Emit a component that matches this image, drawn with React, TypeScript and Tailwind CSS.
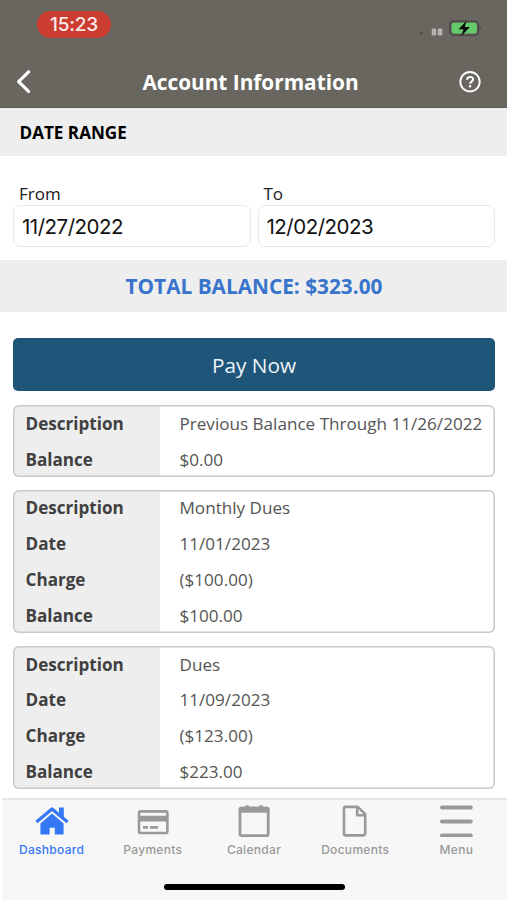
import type { ReactNode } from "react";

type Row = [label: string, value: string];

const entries: Row[][] = [
  [
    ["Description", "Previous Balance Through 11/26/2022"],
    ["Balance", "$0.00"],
  ],
  [
    ["Description", "Monthly Dues"],
    ["Date", "11/01/2023"],
    ["Charge", "($100.00)"],
    ["Balance", "$100.00"],
  ],
  [
    ["Description", "Dues"],
    ["Date", "11/09/2023"],
    ["Charge", "($123.00)"],
    ["Balance", "$223.00"],
  ],
];

const HomeIcon = () => (
  <svg width="34" height="34" viewBox="0 0 34 34" fill="currentColor">
    <path d="M17 10.6 28.6 20.6V30.4a1.2 1.2 0 0 1-1.2 1.2h-7.6v-6.8h-5.2v6.8h-8a1.2 1.2 0 0 1-1.2-1.2V20.6z" />
    <path d="M1.4 19 17 6l15.6 13" fill="none" stroke="currentColor" strokeWidth="3.3" strokeLinejoin="round" />
    <path d="M24 4.6h4.8v12l-4.8-4.2z" />
  </svg>
);

const CardIcon = () => (
  <svg width="34" height="34" viewBox="0 0 34 34" fill="currentColor">
    <rect x="3" y="8.4" width="28.4" height="21.6" rx="1.8" fill="none" stroke="currentColor" strokeWidth="2.6" />
    <path d="M3 12.8h28.4v5.6H3zM7 23h5v2.8H7zM14 23h8v2.8h-8z" />
  </svg>
);

const CalendarIcon = () => (
  <svg width="34" height="34" viewBox="0 0 34 34" fill="currentColor">
    <rect x="3" y="5.2" width="28.2" height="27.4" rx="1.4" fill="none" stroke="currentColor" strokeWidth="2.8" />
    <path d="M3.2 3.8H31l1.4 1.4v4.5H1.8V5.2zM8 3.9l.8-1.7h2.6l.8 1.7zM21.8 3.9l.8-1.7h2.6l.8 1.7z" />
  </svg>
);

const DocumentIcon = () => (
  <svg width="34" height="34" viewBox="0 0 34 34" fill="none" stroke="currentColor" strokeWidth="2.6" strokeLinejoin="round">
    <path d="M7.2 3.9h12.6l7.4 7.2v19.3a2 2 0 0 1-2 2H8a2 2 0 0 1-2-2V5.1a1.2 1.2 0 0 1 1.2-1.2z" />
    <path d="M19.2 4.4v7.8h8" />
  </svg>
);

const MenuIcon = () => (
  <svg width="34" height="34" viewBox="0 0 34 34" stroke="currentColor" strokeWidth="4" strokeLinecap="round">
    <path d="M3 4.4h28.8M3 18.5h28.8M3 32.4h28.8" />
  </svg>
);

const tabs: { label: string; icon: ReactNode; active?: boolean }[] = [
  { label: "Dashboard", icon: <HomeIcon />, active: true },
  { label: "Payments", icon: <CardIcon /> },
  { label: "Calendar", icon: <CalendarIcon /> },
  { label: "Documents", icon: <DocumentIcon /> },
  { label: "Menu", icon: <MenuIcon /> },
];

const StatusBar = () => (
  <div className="flex h-[55px] justify-between pl-[37px] pr-[25px]">
    <span className="mt-[11px] flex h-[27px] w-[74px] items-center justify-center rounded-full bg-[#cc3d31] pt-0.5 font-['Inter',sans-serif] text-[19px] font-medium tracking-[-0.2px] text-[#fbe9e6]">
      15:23
    </span>
    <svg className="mt-[18px]" width="64" height="22" viewBox="0 0 64 22">
      <circle cx="3.5" cy="15.2" r="1.9" fill="#55524e" />
      <rect x="13.7" y="10.5" width="4.6" height="7" rx="1.2" fill="#b5b2af" />
      <rect x="19.8" y="10.5" width="4.6" height="7" rx="1.2" fill="#b5b2af" />
      <rect x="32" y="3.1" width="28.4" height="14" rx="3.8" fill="none" stroke="#45423f" strokeWidth="1.4" />
      <rect x="33.6" y="4.7" width="25.2" height="10.8" rx="2.3" fill="#65ca69" />
      <path d="M61.7 8q2 2.1 0 4.2z" fill="#45423f" />
      <path d="M48.6 2.8 40.5 11.3h5l-2.4 6.9 8.8-9.1h-5.1z" fill="#090b09" />
    </svg>
  </div>
);

const Header = () => (
  <header className="h-[108px] shrink-0 border-b border-[#5d5a55] bg-[#696660] text-white">
    <StatusBar />
    <div className="flex h-[53px] items-center justify-between pl-[15px] pr-[25px]">
      <svg width="18" height="26" viewBox="0 0 18 26" fill="none" stroke="currentColor" strokeWidth="3.2" strokeLinecap="round" strokeLinejoin="round">
        <path d="M13.6 2.8 3.6 12.6l10 9.8" />
      </svg>
      <h1 className="ml-[10px] pt-0.5 text-[20.8px] font-bold">Account Information</h1>
      <svg width="24" height="24" viewBox="0 0 24 24" fill="none" stroke="currentColor" strokeWidth="1.9">
        <circle cx="12" cy="11.7" r="9.7" />
        <path d="M9.1 9.8c0-3.9 6-3.7 6-.3 0 2.1-3 2.1-3 4.2" strokeWidth="2" />
        <circle cx="12.1" cy="16.2" r="1.2" fill="currentColor" stroke="none" />
      </svg>
    </div>
  </header>
);

const DateField = ({ label, value }: { label: string; value: string }) => (
  <label className="flex flex-1 flex-col">
    <span className="pl-1.5 text-[17px] leading-[23px] text-[#202020]">{label}</span>
    <span className="flex h-[42px] items-center rounded-[7px] border border-[#e8e8e8] pl-2 pt-0.5 font-['Inter',sans-serif] text-[20.5px] tracking-[-0.5px] text-[#111]">
      {value}
    </span>
  </label>
);

const EntryCard = ({ rows }: { rows: Row[] }) => (
  <dl className="rounded-[6px] bg-[linear-gradient(to_right,#eeeeee_147px,#ffffff_147px)] shadow-[inset_0_0_0_1.5px_#c9c9c9]">
    {rows.map(([label, value]) => (
      <div key={label} className="flex h-[35.8px] items-center pt-px text-[17.1px]">
        <dt className="w-[147px] shrink-0 pl-[12.5px] font-bold text-[#404040]">{label}</dt>
        <dd className="pl-[19.5px] whitespace-nowrap text-[#555]">{value}</dd>
      </div>
    ))}
  </dl>
);

const TabBar = () => (
  <nav className="mt-auto ml-[2px] h-[102px] shrink-0 border-t-2 border-[#e6e6e6] bg-[#f7f7f7] font-['Inter',sans-serif]">
    <div className="-ml-px flex">
      {tabs.map(({ label, icon, active }) => (
        <a
          key={label}
          href="#"
          className={`flex flex-1 flex-col items-center pt-[3px] text-[12px] font-medium tracking-[0.3px] ${active ? "text-[#3478f6]" : "text-[#999]"}`}
        >
          {icon}
          <span className="mt-[3px] leading-5">{label}</span>
        </a>
      ))}
    </div>
    <div className="mx-auto mt-[24px] h-[6px] w-[181px] rounded-full bg-black" />
  </nav>
);

export default function App() {
  return (
    <div className="flex h-[900px] w-[507px] flex-col overflow-hidden bg-white font-['Open_Sans',sans-serif]">
      <Header />
      <h2 className="flex h-[48px] shrink-0 items-center bg-[#eee] pt-0.5 pl-[19.5px] text-[17.1px] font-bold text-black">
        DATE RANGE
      </h2>
      <div className="flex shrink-0 gap-[7px] pt-[26px] pr-[12px] pb-[13px] pl-[13px]">
        <DateField label="From" value="11/27/2022" />
        <DateField label="To" value="12/02/2023" />
      </div>
      <p className="flex h-[52px] shrink-0 items-center justify-center bg-[#eee] pt-0.5 pl-px text-[20.8px] font-bold text-[#3874cb]">
        TOTAL BALANCE: $323.00
      </p>
      <main className="flex flex-col pt-[26px] pr-[12px] pl-[13px]">
        <button className="h-[53px] rounded-[5px] bg-[#20557a] pt-0.5 text-[20.8px] text-[#eef4f8]">Pay Now</button>
        <div className="mt-[14.3px] flex flex-col gap-[13px]">
          {entries.map((rows, i) => (
            <EntryCard key={i} rows={rows} />
          ))}
        </div>
      </main>
      <TabBar />
    </div>
  );
}
